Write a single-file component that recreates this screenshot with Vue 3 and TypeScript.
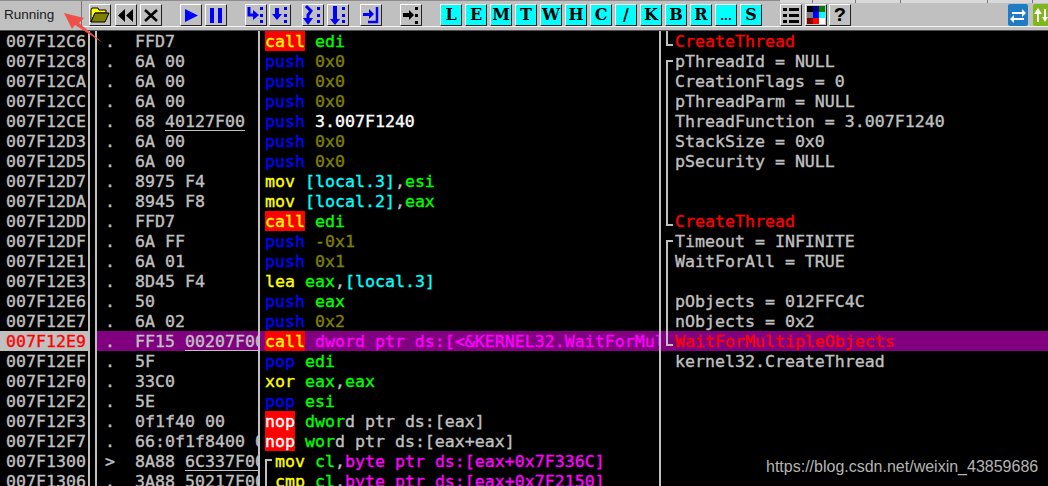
<script setup lang="ts">
interface Seg { t: string; c: string }
interface Row {
  addr: string
  mark?: string
  hex: string
  link?: string
  op: string
  opc: string
  args: Seg[]
  jump?: string
  note?: string
  notec?: string
  br?: string
  sel?: boolean
}
interface Shape { d: string; fill?: string; stroke?: string; sw?: number }
interface Tool { name: string; gap: number; shapes?: Shape[]; letter?: string; cells?: string[] }

const dots = (c: string): Shape => ({ d: 'M15 3h3v3h-3zM15 10h3v3h-3zM15 16h3v3h-3z', fill: c })
const blue = '#0000ff'

const tools: Tool[] = [
  { name: 'open', gap: 8, shapes: [
    { d: 'M2 6l1-2h6l1 2h7v3H6L2 18z', fill: '#ffff00', stroke: '#000', sw: 1 },
    { d: 'M2 18L6 9h14l-4 9z', fill: '#808000', stroke: '#000', sw: 1 }
  ] },
  { name: 'rewind', gap: 4, shapes: [{ d: 'M10 5v13L3 11.500zM18 5v13l-7-6.500z', fill: '#000' }] },
  { name: 'close', gap: 3, shapes: [{ d: 'M5 6l12 11M17 6L5 17', stroke: '#000', sw: 2.600 }] },
  { name: 'run', gap: 18, shapes: [{ d: 'M5 5l13 6.500L5 18z', fill: blue }] },
  { name: 'pause', gap: 3, shapes: [{ d: 'M5 4h4v15H5zM13 4h4v15h-4z', fill: blue }] },
  { name: 'into', gap: 18, shapes: [{ d: 'M4 3v8h5', stroke: blue, sw: 3 }, { d: 'M8 6v10l6-5z', fill: blue }, dots(blue)] },
  { name: 'over', gap: 2, shapes: [{ d: 'M6 4h4v6h3l-5 6-5-6h3z', fill: blue }, dots(blue)] },
  { name: 'trace', gap: 11, shapes: [{ d: 'M4 2l5 5-3 4v5', stroke: blue, sw: 3 }, { d: 'M1 14h10l-5 7z', fill: blue }, dots(blue)] },
  { name: 'traceo', gap: 3, shapes: [{ d: 'M6 2h4v13h3l-5 6-5-6h3z', fill: blue }, dots(blue)] },
  { name: 'ret', gap: 11, shapes: [{ d: 'M3 9h6V5l5 5-5 5v-3H3z', fill: blue }, { d: 'M17 3v15H8', stroke: blue, sw: 2.500 }] },
  { name: 'goto', gap: 18, shapes: [{ d: 'M3 9h6V6l5 5-5 5v-3H3z', fill: '#000' }, { d: 'M15 3h3v3h-3zM15 10h3v3h-3zM15 17h3v3h-3z', fill: '#000' }] },
  ...['L', 'E', 'M', 'T', 'W', 'H', 'C', '/', 'K', 'B', 'R', '...', 'S'].map((l, i) => ({ name: 'l' + i, gap: i === 0 ? 18 : 3, letter: l })),
  { name: 'list', gap: 18, shapes: [{ d: 'M3 4h4v3H3zM9 4h10v3H9zM3 10h4v3H3zM9 10h10v3H9zM3 16h4v3H3zM9 16h10v3H9z', fill: '#000' }] },
  { name: 'colors', gap: 3, cells: ['#000', '#000080', '#008000', '#808080', '#0000ff', '#00ffff', '#800000', '#ff0000', '#fff'] },
  { name: 'help', gap: 2, letter: '?' }
]

const g = (t: string): Seg => ({ t, c: 'lime' })
const o = (t: string): Seg => ({ t, c: 'olive' })
const y = (t: string): Seg => ({ t, c: 'grey' })
const m = (t: string): Seg => ({ t, c: 'mag' })
const cy = (t: string): Seg => ({ t, c: 'cyan' })
const w = (t: string): Seg => ({ t, c: 'white' })

const rows: Row[] = [
  { addr: '007F12C6', hex: 'FFD7', op: 'call', opc: 'call', args: [g(' edi')], note: 'CreateThread', notec: 'red', br: 'end' },
  { addr: '007F12C8', hex: '6A 00', op: 'push', opc: 'push', args: [o(' 0x0')], note: 'pThreadId = NULL', br: 'top' },
  { addr: '007F12CA', hex: '6A 00', op: 'push', opc: 'push', args: [o(' 0x0')], note: 'CreationFlags = 0', br: 'mid' },
  { addr: '007F12CC', hex: '6A 00', op: 'push', opc: 'push', args: [o(' 0x0')], note: 'pThreadParm = NULL', br: 'mid' },
  { addr: '007F12CE', hex: '68 ', link: '40127F00', op: 'push', opc: 'push', args: [w(' 3.007F1240')], note: 'ThreadFunction = 3.007F1240', br: 'mid' },
  { addr: '007F12D3', hex: '6A 00', op: 'push', opc: 'push', args: [o(' 0x0')], note: 'StackSize = 0x0', br: 'mid' },
  { addr: '007F12D5', hex: '6A 00', op: 'push', opc: 'push', args: [o(' 0x0')], note: 'pSecurity = NULL', br: 'mid' },
  { addr: '007F12D7', hex: '8975 F4', op: 'mov', opc: 'plain', args: [cy(' [local.3]'), y(','), g('esi')], br: 'mid' },
  { addr: '007F12DA', hex: '8945 F8', op: 'mov', opc: 'plain', args: [cy(' [local.2]'), y(','), g('eax')], br: 'mid' },
  { addr: '007F12DD', hex: 'FFD7', op: 'call', opc: 'call', args: [g(' edi')], note: 'CreateThread', notec: 'red', br: 'end' },
  { addr: '007F12DF', hex: '6A FF', op: 'push', opc: 'push', args: [o(' -0x1')], note: 'Timeout = INFINITE', br: 'top' },
  { addr: '007F12E1', hex: '6A 01', op: 'push', opc: 'push', args: [o(' 0x1')], note: 'WaitForAll = TRUE', br: 'mid' },
  { addr: '007F12E3', hex: '8D45 F4', op: 'lea', opc: 'plain', args: [g(' eax'), y(','), cy('[local.3]')], br: 'mid' },
  { addr: '007F12E6', hex: '50', op: 'push', opc: 'push', args: [g(' eax')], note: 'pObjects = 012FFC4C', br: 'mid' },
  { addr: '007F12E7', hex: '6A 02', op: 'push', opc: 'push', args: [o(' 0x2')], note: 'nObjects = 0x2', br: 'mid' },
  { addr: '007F12E9', hex: 'FF15 ', link: '00207F00', op: 'call', opc: 'call', args: [m(' dword ptr ds:[<&KERNEL32.WaitForMultipleObjects>]')], note: 'WaitForMultipleObjects', notec: 'red', br: 'end', sel: true },
  { addr: '007F12EF', hex: '5F', op: 'pop', opc: 'push', args: [g(' edi')], note: 'kernel32.CreateThread' },
  { addr: '007F12F0', hex: '33C0', op: 'xor', opc: 'plain', args: [g(' eax'), y(','), g('eax')] },
  { addr: '007F12F2', hex: '5E', op: 'pop', opc: 'push', args: [g(' esi')] },
  { addr: '007F12F3', hex: '0f1f40 00', op: 'nop', opc: 'nop', args: [g(' dwor'), y('d ptr ds:[eax]')] },
  { addr: '007F12F7', hex: '66:0f1f8400 00', op: 'nop', opc: 'nop', args: [g(' wor'), y('d ptr ds:[eax+eax]')] },
  { addr: '007F1300', mark: '>', hex: '8A88 ', link: '6C337F00', op: 'mov', opc: 'plain', jump: 'top', args: [g(' cl'), y(','), m('byte ptr ds:[eax+0x7F336C]')] },
  { addr: '007F1306', hex: '3A88 ', link: '50217F00', op: 'cmp', opc: 'plain', jump: 'mid', args: [g(' cl'), y(','), m('byte ptr ds:[eax+0x7F2150]')] }
]

const tabEdges = [32, 75, 120, 207, 252]
</script>

<template>
  <div class="page">
    <header class="bar">
      <div class="tabs">
        <span v-for="e in tabEdges" :key="e" class="tabedge" :style="{ left: e + 'px' }"></span>
      </div>
      <div class="status">Running</div>
      <div class="tools">
        <div
          v-for="tool in tools"
          :key="tool.name"
          class="tool"
          :class="{ cyanbtn: tool.letter && tool.letter !== '?', help: tool.letter === '?', more: tool.letter === '...' }"
          :style="{ marginLeft: tool.gap + 'px' }"
        >
          <svg v-if="tool.shapes" width="22" height="22" viewBox="0 0 22 22">
            <path
              v-for="(s, i) in tool.shapes"
              :key="i"
              :d="s.d"
              :fill="s.fill || 'none'"
              :stroke="s.stroke"
              :stroke-width="s.sw"
            />
          </svg>
          <div v-else-if="tool.cells" class="swatches">
            <i v-for="c in tool.cells" :key="c" :style="{ background: c }"></i>
          </div>
          <span v-else>{{ tool.letter }}</span>
        </div>
      </div>
      <div class="spring"></div>
      <div class="app blueapp">
        <svg width="20" height="22" viewBox="0 0 20 22">
          <path d="M4 8h10V5l4 4-4 4v-3H4zM16 14H6v-3l-4 4 4 4v-3h10z" fill="#fff" />
        </svg>
      </div>
      <div class="app greenapp">
        <svg width="15" height="22" viewBox="0 0 15 22">
          <path d="M5 4l4 6H6v8H4v-8H1zM12 18l-3-5h2V5h2v8h2z" fill="#fff" />
        </svg>
      </div>
    </header>

    <main class="list">
      <div v-for="r in rows" :key="r.addr" class="row" :class="{ sel: r.sel }">
        <div class="addr">{{ r.addr }}</div>
        <div class="hex">
          <span class="mark">{{ r.mark || '.' }}</span>
          <span class="bytes">{{ r.hex }}<span v-if="r.link" class="link">{{ r.link }}</span></span>
        </div>
        <div class="dis" :class="{ jumped: r.jump }">
          <span v-if="r.jump" class="jump" :class="r.jump"></span>
          <span class="op" :class="r.opc">{{ r.op }}</span>
          <span v-for="(a, i) in r.args" :key="i" :class="a.c">{{ a.t }}</span>
        </div>
        <div class="note" :class="r.notec">
          <span v-if="r.br" class="brace" :class="r.br"></span>{{ r.note }}
        </div>
      </div>
    </main>

    <svg class="arrow" width="110" height="50" viewBox="0 0 110 50">
      <path d="M64 13l20 5-5 5 24 20-28-18-3 4z" fill="#f0504a" />
    </svg>
    <div class="mark-url">https://blog.csdn.net/weixin_43859686</div>
  </div>
</template>

<style>
html, body { margin: 0; background: #000; overflow: hidden; }
</style>

<style scoped>
.page {
  position: relative;
  width: 1048px;
  height: 486px;
  overflow: hidden;
  background: #000;
  font-family: "DejaVu Sans Mono", "Liberation Mono", monospace;
  font-size: 16.600px;
  color: #c0c0c0;
}
.bar {
  position: relative;
  display: flex;
  box-sizing: border-box;
  height: 31px;
  padding-top: 3px;
  background: #c0c0c0;
  border-top: 1px solid #8c8c8c;
  border-bottom: 1px solid #505050;
}
.bar::after {
  content: "";
  position: absolute;
  left: 82px;
  right: 0;
  top: 25px;
  height: 1px;
  background: #f4f4f4;
}
.tabs {
  position: absolute;
  left: 780px;
  right: 0;
  top: -1px;
  height: 3px;
  background: #d8d8d8;
}
.tabedge {
  position: absolute;
  top: 0;
  width: 1px;
  height: 3px;
  background: #777;
}
.status {
  box-sizing: border-box;
  width: 82px;
  height: 26px;
  margin-top: -3px;
  padding: 6px 0 0 4px;
  border-right: 1px solid #777;
  font: 13.500px "Liberation Sans", sans-serif;
  color: #1a1a1a;
}
.tools { display: flex; height: 22px; margin-left: -1px; }
.tool {
  box-sizing: border-box;
  display: flex;
  align-items: center;
  justify-content: center;
  width: 22px;
  height: 22px;
  background: #c0c0c0;
  border: 1px solid;
  border-color: #fff #222 #222 #fff;
  color: #000;
  font: bold 16px "DejaVu Serif", serif;
  line-height: 1;
}
.tool svg { flex: none; margin: -1px; }
.cyanbtn { background: #00ffff; }
.help { font: bold 20px "Liberation Mono", monospace; }
.more { font: bold 10px "DejaVu Sans", sans-serif; padding-top: 2px; }
.swatches {
  display: grid;
  grid-template-columns: repeat(3, 6px);
  grid-auto-rows: 6px;
}
.spring { flex: 1; }
.app { height: 22px; flex: none; }
.blueapp { width: 20px; margin-right: 5px; background: #1f7cc4; border-radius: 2px; }
.greenapp { width: 15px; background: #7fb61c; border-radius: 2px 0 0 2px; }

.list { display: flex; flex-direction: column; -webkit-text-stroke: 0.350px; }
.row {
  display: grid;
  grid-template-columns: 90px 170px 401px 1fr;
  height: 20px;
  line-height: 22px;
  white-space: pre;
}
.row > div { overflow: hidden; height: 20px; }
.addr {
  box-sizing: border-box;
  padding-left: 6px;
  border-right: 2px solid #c0c0c0;
}
.hex {
  box-sizing: border-box;
  position: relative;
  padding-left: 7px;
  display: flex;
  border-right: 2px solid #c0c0c0;
  background: linear-gradient(to right, #000 5px, #c0c0c0 5px, #c0c0c0 7px, transparent 7px);
}
.mark { width: 38px; padding-left: 8px; box-sizing: border-box; flex: none; }
.bytes { white-space: pre; }
.link {
  display: inline-block;
  box-sizing: border-box;
  height: 20px;
  border-bottom: 1px solid #c0c0c0;
  vertical-align: top;
}
.dis {
  box-sizing: border-box;
  padding-left: 5px;
  border-right: 2px solid #c0c0c0;
  position: relative;
}
.jumped { padding-left: 15px; }
.jump {
  position: absolute;
  left: 5px;
  width: 2px;
  background: #c0c0c0;
}
.jump.top { top: 8px; bottom: 0; }
.jump.top::after {
  content: "";
  position: absolute;
  top: 0;
  left: 0;
  width: 7px;
  height: 2px;
  background: #c0c0c0;
}
.jump.mid { top: 0; bottom: 0; }
.op { display: inline-block; height: 20px; vertical-align: top; }
.call { background: #ff0000; color: #ffff00; }
.nop { background: #ff0000; color: #fff; }
.push { color: #0000ff; }
.plain { color: #ffff00; }
.lime { color: #00ff00; }
.olive { color: #808000; }
.grey { color: #c0c0c0; }
.mag { color: #ff00ff; }
.cyan { color: #00ffff; }
.white { color: #fff; }
.note { position: relative; padding-left: 14px; }
.note.red { color: #ff0000; }
.brace {
  position: absolute;
  left: 5px;
  width: 2px;
  background: #c0c0c0;
}
.brace.mid { top: 0; bottom: 0; }
.brace.top { top: 9px; bottom: 0; }
.brace.end { top: 0; height: 15px; }
.brace.top::after, .brace.end::after {
  content: "";
  position: absolute;
  left: 0;
  width: 7px;
  height: 2px;
  background: #c0c0c0;
}
.brace.top::after { top: 0; }
.brace.end::after { bottom: 0; }
.sel { background: linear-gradient(to right, #000 97px, #800080 97px); }
.sel .addr { background: #c0c0c0; color: #ff0000; }
.sel .hex { background: linear-gradient(to right, transparent 5px, #c0c0c0 5px, #c0c0c0 7px, transparent 7px); }
.arrow { position: absolute; left: 0; top: 0; }
.mark-url {
  position: absolute;
  left: 766px;
  top: 458px;
  font: 16px "Liberation Sans", sans-serif;
  color: #b4b4b4;
}
</style>
